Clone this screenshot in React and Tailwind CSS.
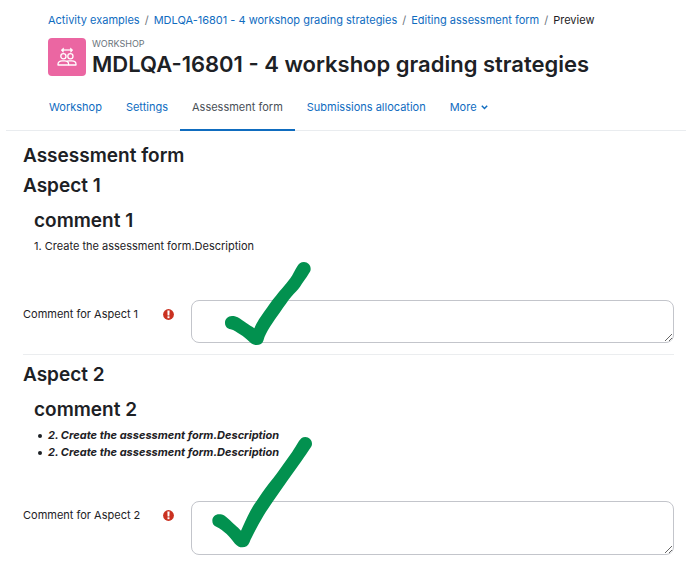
import React from "react";

const crumbs = [
  "Activity examples",
  "MDLQA-16801 - 4 workshop grading strategies",
  "Editing assessment form",
];

const tabs = ["Workshop", "Settings", "Assessment form", "Submissions allocation"];

function WorkshopIcon() {
  return (
    <svg
      viewBox="0 0 20 20"
      className="h-5 w-5"
      fill="none"
      stroke="white"
      strokeWidth="1.3"
      strokeLinejoin="round"
      aria-hidden="true"
    >
      <path d="M5.5 3h9" />
      <path d="M6.6 1 4.2 3l2 2.4zM13.4 1l2.4 2-2 2.4z" fill="white" strokeWidth=".6" />
      <circle cx="6.4" cy="9.3" r="2.6" />
      <circle cx="13.4" cy="9.3" r="2.6" />
      <path d="M1 18v-.8c0-2.2 1.8-3.4 4-3.4h2.6c2.3 0 4 1.2 4 3.4v.8z" />
      <path d="M10.2 14.2c.8-.3 1.4-.4 2.2-.4h2.4c2.3 0 4.2 1.2 4.2 3.4v.8h-7.4" />
    </svg>
  );
}

function RequiredIcon() {
  return (
    <svg viewBox="0 0 11 11" className="h-[11px] w-[11px]" role="img" aria-label="Required">
      <circle cx="5.5" cy="5.5" r="5.4" fill="#ca3120" />
      <path d="M4.4 1.4h2.2L6.4 6.4H4.6z" fill="white" />
      <rect x="4.5" y="7.3" width="2" height="1.9" fill="white" />
    </svg>
  );
}

function CommentField({ id, label, boxClass, children }) {
  return (
    <div className="flex items-start">
      <div className="flex w-[168px] shrink-0 items-center justify-between pt-1.5 pr-[17px]">
        <label htmlFor={id}>{label}</label>
        <RequiredIcon />
      </div>
      <div className="relative flex-1">
        <textarea
          id={id}
          className={`block w-full resize rounded-lg border border-[#c3c5cb] bg-white px-2 py-1 outline-none ${boxClass}`}
        />
        {children}
      </div>
    </div>
  );
}

export default function App() {
  return (
    <div className="min-h-screen bg-white pb-2.5 font-['Inter',sans-serif] text-[11px] leading-[17px] text-[#1d2125]">
      <header className="pt-3 pl-12">
        <nav aria-label="Breadcrumb">
          <ol className="flex">
            {crumbs.map((crumb) => (
              <li key={crumb} className="flex">
                <a href="#" className="text-[#0f6cbf]">
                  {crumb}
                </a>
                <span className="px-[5px] text-[#6a737b]">/</span>
              </li>
            ))}
            <li aria-current="page">Preview</li>
          </ol>
        </nav>

        <div className="mt-[9px] flex items-start gap-1.5">
          <div className="flex h-[38px] w-[38px] items-center justify-center rounded-sm bg-[#eb66a2]">
            <WorkshopIcon />
          </div>
          <div>
            <div className="text-[9px] leading-3 text-[#6a737b] uppercase">Workshop</div>
            <h1 className="text-[22px] leading-7 font-semibold">
              MDLQA-16801 - 4 workshop grading strategies
            </h1>
          </div>
        </div>
      </header>

      <nav className="mt-[7px] ml-1.5 flex border-b border-[#e9ecef] pl-[31px]">
        {tabs.map((tab) => (
          <a
            key={tab}
            href="#"
            className={
              tab === "Assessment form"
                ? "-mb-px border-b-2 border-[#0f6cbf] px-3 pt-3.5 pb-[13px] text-[#495057]"
                : "px-3 pt-3.5 pb-[13px] text-[#0f6cbf]"
            }
          >
            {tab}
          </a>
        ))}
        <button type="button" className="flex items-center gap-1 self-start px-3 pt-3.5 text-[#0f6cbf]">
          More
          <svg viewBox="0 0 7 5" className="h-[5px] w-[7px]" fill="none" aria-hidden="true">
            <path d="M.8.8 3.5 3.5 6.2.8" stroke="currentColor" strokeWidth="1.5" />
          </svg>
        </button>
      </nav>

      <main className="pt-[13px] pr-3 pl-[23px]">
        <h2 className="text-[19px] leading-6 font-semibold">Assessment form</h2>

        <section className="border-b border-[#ebedef] pb-[11px]">
          <h3 className="mt-1.5 text-[19px] leading-6 font-semibold">Aspect 1</h3>
          <div className="mt-[11px] mb-[45px] pl-[11px]">
            <h4 className="mb-[5px] text-[19px] leading-6 font-semibold">comment 1</h4>
            <p>1. Create the assessment form.Description</p>
          </div>
          <CommentField id="comment-1" label="Comment for Aspect 1" boxClass="h-[43px]">
            <svg
              viewBox="0 0 300 300"
              className="pointer-events-none absolute -top-[45px] left-[29px] h-[100px] w-[100px]"
              fill="#02914f"
              aria-hidden="true"
            >
              <path d="M36 183C24 183 15 192 15 203C15 215 22 220 32 223C42 225 50 232 60 238C72 245 80 252 90 262C97 268 103 270 110 270C120 270 127 266 130 257C134 242 141 229 150 215C160 199 171 184 181 170C193 154 203 138 215 124C224 113 233 105 240 95C248 83 258 70 267 55C271 49 272 46 272 41C272 30 263 21 252 21C242 21 236 27 231 35C224 46 220 57 211 70C204 80 196 89 188 98C175 113 161 130 149 147C139 162 127 177 117 193C111 203 107 211 103 220C94 214 88 210 80 205C69 198 62 191 53 187C47 184 42 183 36 183Z" />
            </svg>
          </CommentField>
        </section>

        <section className="pt-2">
          <h3 className="text-[19px] leading-6 font-semibold">Aspect 2</h3>
          <div className="mt-[11px] mb-10 pl-[11px]">
            <h4 className="mb-[5px] text-[19px] leading-6 font-semibold">comment 2</h4>
            <ul className="pl-1 font-bold italic">
              <li className="flex items-center gap-1.5 before:h-1 before:w-1 before:rounded-full before:bg-[#1d2125]">
                2. Create the assessment form.Description
              </li>
              <li className="flex items-center gap-1.5 before:h-1 before:w-1 before:rounded-full before:bg-[#1d2125]">
                2. Create the assessment form.Description
              </li>
            </ul>
          </div>
          <CommentField id="comment-2" label="Comment for Aspect 2" boxClass="h-[54px]">
            <svg
              viewBox="0 0 360 375"
              className="pointer-events-none absolute -top-[71px] left-3.5 h-[125px] w-[120px]"
              fill="#02914f"
              aria-hidden="true"
            >
              <path d="M42 253C31 253 22 261 22 272C22 281 26 286 34 290C46 296 55 303 65 312C74 320 81 331 90 341C97 348 103 352 112 352C122 352 129 347 133 338C138 326 142 319 148 307C156 291 165 274 175 258C184 243 192 232 202 217C217 196 231 175 246 154C261 133 275 112 290 92C299 79 307 68 316 54C319 49 321 46 321 41C321 30 312 21 301 21C292 21 287 26 282 33C275 45 269 54 262 65C247 87 231 108 216 130C201 150 185 169 171 189C159 207 146 224 136 243C126 262 117 283 108 302C102 296 97 291 90 285C80 276 70 265 59 257C54 254 48 253 42 253Z" />
            </svg>
          </CommentField>
        </section>
      </main>
    </div>
  );
}
